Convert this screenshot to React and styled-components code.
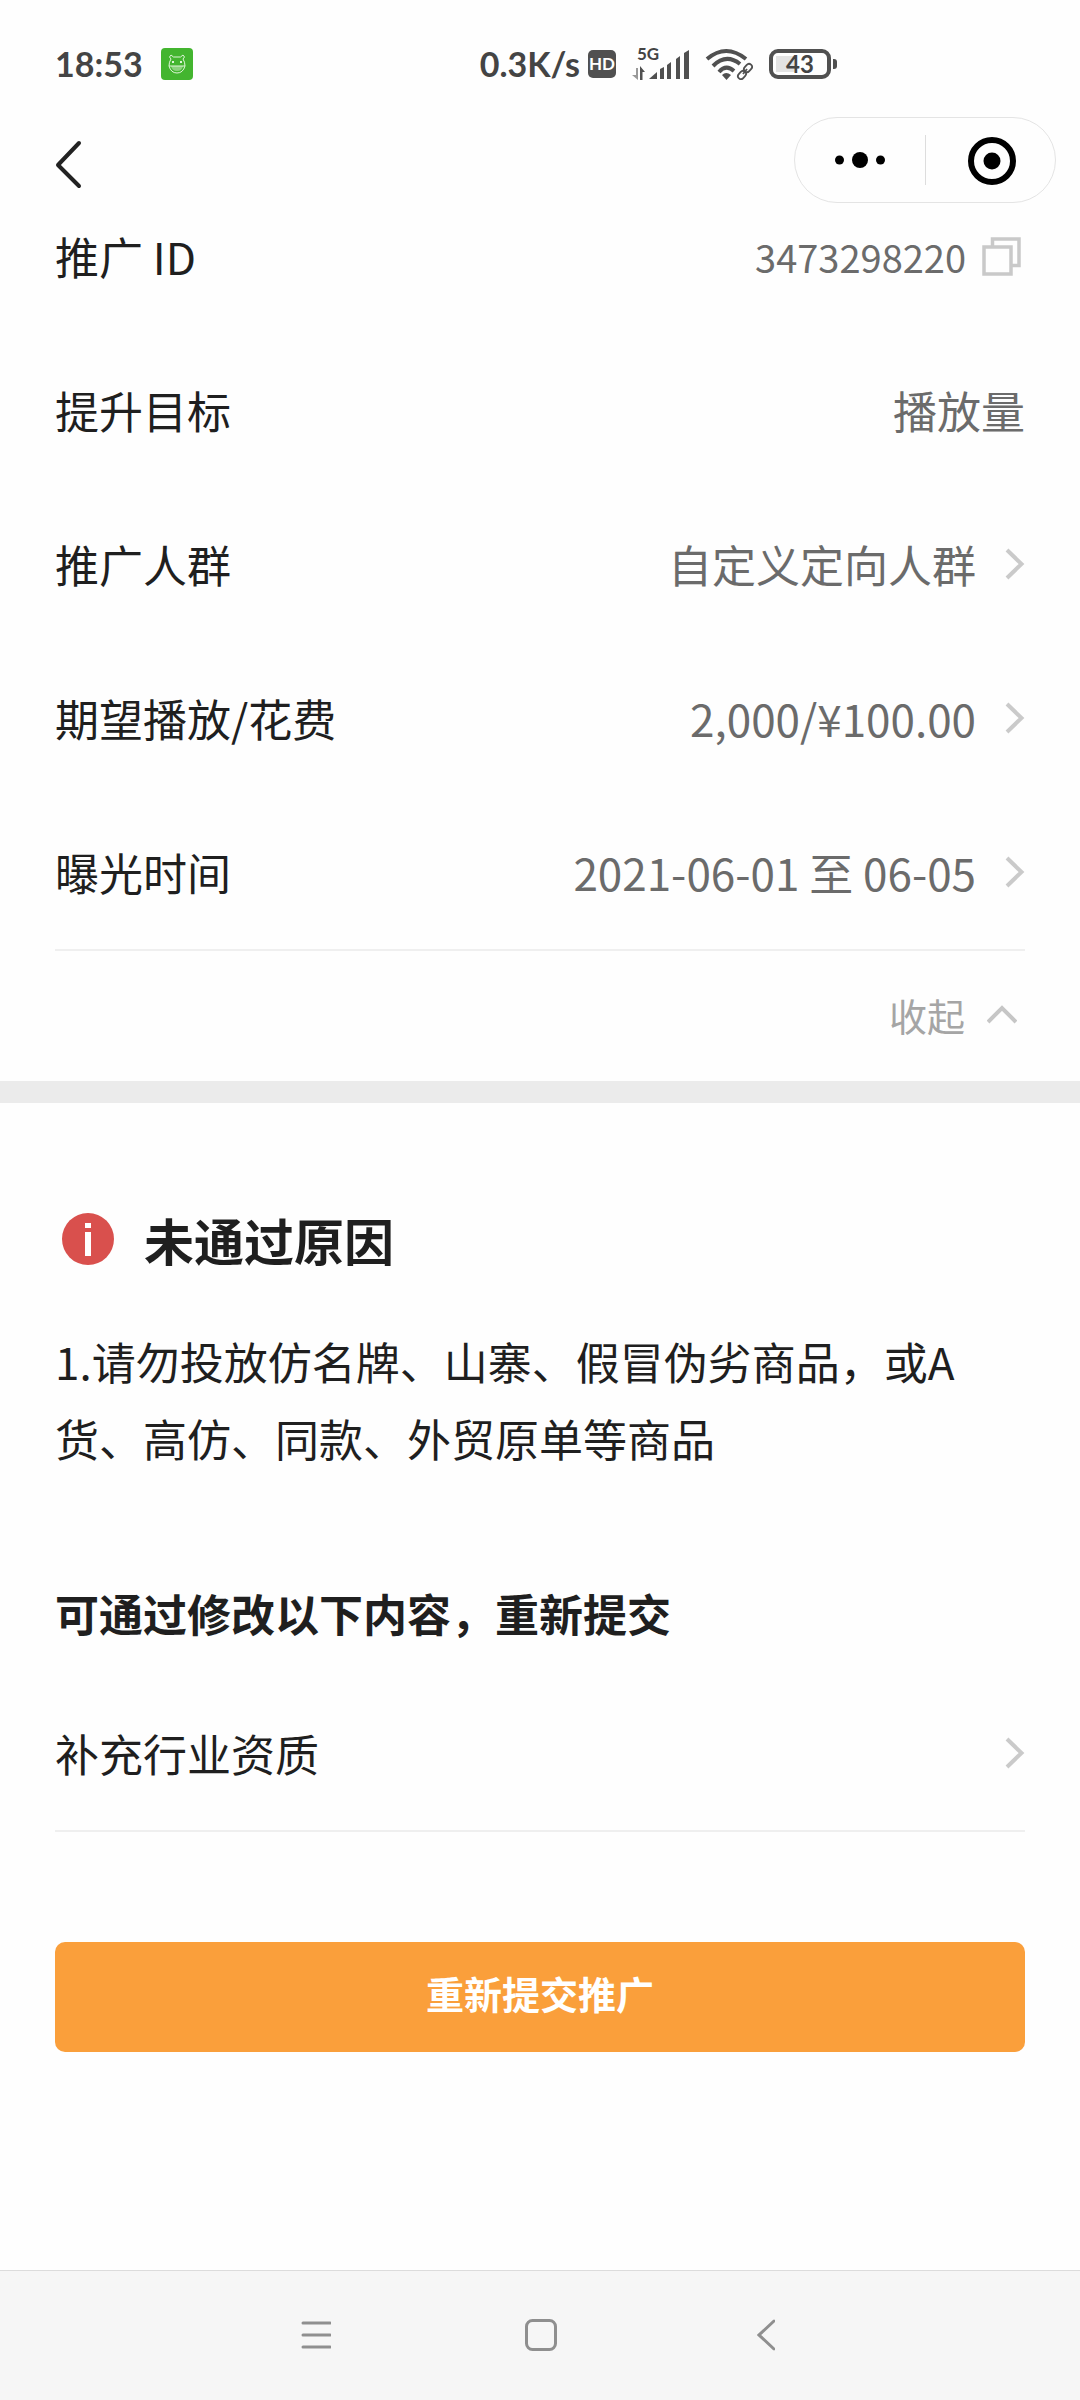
import React, { useState } from "react";
import styled, { createGlobalStyle } from "styled-components";

const sidePadding = 55;

const GlobalStyle = createGlobalStyle`
  * {
    box-sizing: border-box;
  }
  body {
    margin: 0;
    background: #fefefe;
    color: #1f1f1f;
    font-family: "Noto Sans CJK SC", sans-serif;
    font-size: 44px;
  }
  button {
    margin: 0;
    padding: 0;
    border: 0;
    background: none;
    color: inherit;
    font: inherit;
    cursor: pointer;
  }
  svg {
    display: block;
    flex-shrink: 0;
  }
`;

// styled components
const Page = styled.div`
  display: flex;
  flex-direction: column;
  min-height: 100vh;
`;
const Header = styled.header`
  position: relative;
  z-index: 1;
`;
const StatusBar = styled.div`
  display: flex;
  align-items: center;
  height: 84px;
  padding: 44px 243px 0 ${sidePadding}px;
  color: #444;
  font-family: Lato, sans-serif;
  font-size: 34px;
  font-weight: 700;
  line-height: 40px;
`;
const AppBadge = styled.span`
  margin-left: 18px;
`;
const StatusGroup = styled.div`
  display: flex;
  align-items: center;
  margin-left: auto;
`;
const HdBadge = styled.span`
  width: 28px;
  height: 28px;
  margin: 0 16px 0 8px;
  border-radius: 5px;
  background: #505050;
  color: #fff;
  font-size: 17px;
  line-height: 28px;
  text-align: center;
`;
const Signal = styled.div`
  position: relative;
  margin-right: 15px;
`;
const SignalType = styled.span`
  position: absolute;
  top: 0;
  left: 5px;
  font-size: 17px;
  line-height: 12px;
`;
const Battery = styled.div`
  display: flex;
  align-items: center;
  margin-left: 16px;
`;
const BatteryCase = styled.div`
  width: 62px;
  height: 30px;
  border: 4px solid #505050;
  border-radius: 9px;
  background: linear-gradient(#e3e3e3, #e3e3e3) 3px 3px / 20px 16px no-repeat;
  font-size: 24px;
  line-height: 22px;
  text-align: center;
`;
const BatteryTip = styled.span`
  width: 4px;
  height: 10px;
  margin-left: 2px;
  border-radius: 0 3px 3px 0;
  background: #505050;
`;
const NavBar = styled.div`
  display: flex;
  align-items: center;
  justify-content: space-between;
  padding: 33px 24px 0 ${sidePadding}px;
`;
const Capsule = styled.div`
  display: flex;
  align-items: center;
  width: 262px;
  height: 86px;
  border: 1px solid #e4e4e4;
  border-radius: 43px;
`;
const CapsuleButton = styled.button`
  display: flex;
  flex: 1;
  justify-content: center;

  & + & {
    border-left: 1px solid #ddd;
  }
`;
// the list is scrolled a little way under the header
const Details = styled.section`
  margin-top: -24px;
  padding: 0 ${sidePadding}px;
`;
const Row = styled.div`
  display: flex;
  align-items: center;
  width: 100%;
  height: 154px;
  text-align: left;
`;
const Label = styled.span`
  flex: 1;
`;
const Value = styled.span`
  color: #6b6b6b;
  font-size: ${props => props.$small ? "38px" : "44px"};
`;
const CopyButton = styled.button`
  margin: 0 4px 0 16px;
`;
const RowArrow = styled.span`
  margin-left: 29px;
`;
const Divider = styled.hr`
  height: 2px;
  margin: 0;
  border: 0;
  background: #efefef;
`;
const Collapse = styled.button`
  display: flex;
  align-items: center;
  gap: 22px;
  height: 130px;
  margin-left: auto;
  padding: 0 8px 4px 0;
  color: #a5a5a5;
  font-size: 38px;
`;
const Band = styled.div`
  height: 22px;
  background: #ebebeb;
`;
const Reason = styled.section`
  padding: 100px ${sidePadding}px 0;
`;
const ReasonTitle = styled.h2`
  display: flex;
  align-items: center;
  gap: 30px;
  margin: 0;
  padding-left: 7px;
  font-size: 50px;
  line-height: 72px;
`;
const ReasonText = styled.p`
  margin: 48px 0 0;
  padding-right: 54px;
  line-height: 77px;
`;
const SubTitle = styled.h3`
  margin: 98px 0 24px;
  font-size: 44px;
  line-height: 77px;
`;
const SubmitButton = styled.button`
  width: 100%;
  height: 110px;
  margin: 110px 0;
  padding-bottom: 10px;
  border-radius: 10px;
  background: #fa9f3b;
  color: #fff;
  font-size: 38px;
  font-weight: 700;
`;
const SystemNav = styled.nav`
  display: flex;
  justify-content: center;
  height: 130px;
  margin-top: auto;
  padding: 0 0 2px 2px;
  border-top: 1px solid #dcdcdc;
  background: #f6f6f6;
`;
const SystemButton = styled.button`
  display: flex;
  align-items: center;
  justify-content: center;
  width: 225px;
`;

// icons
const RobotIcon = () => (
  <svg width="32" height="32" viewBox="0 0 32 32" fill="none" stroke="#dff5d8" strokeWidth="1">
    <rect width="32" height="32" rx="4" fill="#43b52f" stroke="none" />
    <path d="M10 11 L8.500 9 L10 7 L12.500 9 H19.500 L22 7 L23.500 9 L22 11 Q24 14 24 18 Q22 25 16 25 Q10 25 8 18 Q8 14 10 11 Z" />
    <path d="M10 18 H22 Q21 23 16 23 Q11 23 10 18" fill="#8bd37d" stroke="none" />
    <path d="M8 18 H24" />
    <path d="M12 13 V15 M20 13 V15" strokeWidth="2" />
  </svg>
);
const SignalIcon = () => (
  <svg width="58" height="32" viewBox="0 0 58 32" fill="#505050">
    <path d="M4 20 H6 V32 L0 27 H4 Z" fill="#999" />
    <path d="M8 32 V18 L13 24 H10.500 V32 Z" />
    <path d="M17 31 L25 24 V31 Z" />
    <path d="M28 21 L32 19 V31 H28 Z" />
    <path d="M35 17 L39 14 V31 H35 Z" />
    <path d="M44 11 L48 8 V31 H44 Z" />
    <path d="M52 5 L57 2 V31 H52 Z" />
  </svg>
);
const WifiIcon = () => (
  <svg width="48" height="32" viewBox="0 0 48 32" fill="none" stroke="#505050">
    <path d="M2 11 Q21 -5 41 11" strokeWidth="4" />
    <path d="M8 18 Q21 5 35 16" strokeWidth="4" />
    <path d="M14 24 Q21 16 29 23" strokeWidth="4" />
    <path d="M17 27 Q21 23 26 27 L21.500 32 Z" fill="#505050" stroke="none" />
    <g strokeWidth="1.800">
      <rect x="-4.500" y="-3" width="9" height="6" rx="3" transform="translate(43 20) rotate(-48)" />
      <rect x="-4.500" y="-3" width="9" height="6" rx="3" transform="translate(37 27) rotate(-48)" />
      <path d="M38 26 L42 21" />
    </g>
  </svg>
);
const BackIcon = () => (
  <svg width="28" height="58" viewBox="0 0 28 58" fill="none" stroke="#222" strokeWidth="4" strokeLinecap="round" strokeLinejoin="round">
    <path d="M24 12 L3 34 L24 55" />
  </svg>
);
const MoreIcon = () => (
  <svg width="50" height="50" viewBox="0 0 50 50">
    <circle cx="4.500" cy="25" r="4.500" />
    <circle cx="25" cy="25" r="8" />
    <circle cx="45.500" cy="25" r="4.500" />
  </svg>
);
const TargetIcon = () => (
  <svg width="52" height="50" viewBox="0 0 52 50">
    <circle cx="28" cy="26" r="21" fill="none" stroke="#000" strokeWidth="6" />
    <circle cx="28" cy="26" r="8.500" />
  </svg>
);
const CopyIcon = () => (
  <svg width="39" height="39" viewBox="0 0 39 39" fill="none" stroke="#c9c9c9" strokeWidth="3.500">
    <path d="M10.500 9 V2 H37 V28.500 H30" />
    <rect x="2" y="10" width="27" height="27" />
  </svg>
);
const ArrowIcon = () => (
  <svg width="20" height="32" viewBox="0 0 20 32" fill="none" stroke="#cacaca" strokeWidth="4">
    <path d="M2 2 L16.500 16 L2 30" />
  </svg>
);
const UpIcon = () => (
  <svg width="30" height="20" viewBox="0 0 30 20" fill="none" stroke="#c6c6c6" strokeWidth="4">
    <path d="M1 18 L15 4 L29 18" />
  </svg>
);
const InfoIcon = () => (
  <svg width="52" height="52" viewBox="0 0 52 52">
    <circle cx="26" cy="26" r="26" fill="#d9504d" />
    <rect x="23" y="10" width="6" height="5" fill="#fff" />
    <rect x="23" y="19" width="6" height="24" fill="#fff" />
  </svg>
);
const MenuIcon = () => (
  <svg width="30" height="32" viewBox="0 0 30 32" stroke="#8f8f8f" strokeWidth="3" strokeLinecap="round">
    <path d="M2 4 H29 M2 16 H29 M2 28 H29" />
  </svg>
);
const HomeIcon = () => (
  <svg width="32" height="32" viewBox="0 0 32 32" fill="none" stroke="#8f8f8f" strokeWidth="3">
    <rect x="1.500" y="1.500" width="29" height="29" rx="6" />
  </svg>
);
const SystemBackIcon = () => (
  <svg width="18" height="32" viewBox="0 0 18 32" fill="none" stroke="#8f8f8f" strokeWidth="3" strokeLinecap="round">
    <path d="M17 2 L2 16 L17 30" />
  </svg>
);

const details = [
  { label: "推广 ID", value: "3473298220", copy: true },
  { label: "提升目标", value: "播放量" },
  { label: "推广人群", value: "自定义定向人群", link: true },
  { label: "期望播放/花费", value: "2,000/¥100.00", link: true },
  { label: "曝光时间", value: "2021-06-01 至 06-05", link: true },
];

// main component
const App = () => {
  const [open, setOpen] = useState(true);

  const renderRow = item => (
    <Row key={item.label} as={item.link ? "button" : "div"}>
      <Label>{item.label}</Label>
      {item.value && <Value $small={item.copy}>{item.value}</Value>}
      {item.copy && <CopyButton aria-label="复制"><CopyIcon /></CopyButton>}
      {item.link && <RowArrow><ArrowIcon /></RowArrow>}
    </Row>
  );

  return (
    <Page lang="zh-CN">
      <GlobalStyle />
      <Header>
        <StatusBar>
          <span>18:53</span>
          <AppBadge><RobotIcon /></AppBadge>
          <StatusGroup>
            <span>0.3K/s</span>
            <HdBadge>HD</HdBadge>
            <Signal>
              <SignalType>5G</SignalType>
              <SignalIcon />
            </Signal>
            <WifiIcon />
            <Battery>
              <BatteryCase>43</BatteryCase>
              <BatteryTip />
            </Battery>
          </StatusGroup>
        </StatusBar>
        <NavBar>
          <button aria-label="返回"><BackIcon /></button>
          <Capsule>
            <CapsuleButton aria-label="更多"><MoreIcon /></CapsuleButton>
            <CapsuleButton aria-label="关闭"><TargetIcon /></CapsuleButton>
          </Capsule>
        </NavBar>
      </Header>
      <main>
        <Details>
          {(open ? details : details.slice(0, 1)).map(renderRow)}
          <Divider />
          <Collapse aria-expanded={open} onClick={() => setOpen(!open)}>
            {open ? "收起" : "展开"}
            <UpIcon />
          </Collapse>
        </Details>
        <Band />
        <Reason>
          <ReasonTitle>
            <InfoIcon />
            未通过原因
          </ReasonTitle>
          <ReasonText>
            1.请勿投放仿名牌、山寨、假冒伪劣商品，或A货、高仿、同款、外贸原单等商品
          </ReasonText>
          <SubTitle>可通过修改以下内容，重新提交</SubTitle>
          {renderRow({ label: "补充行业资质", link: true })}
          <Divider />
          <SubmitButton>重新提交推广</SubmitButton>
        </Reason>
      </main>
      <SystemNav>
        <SystemButton aria-label="最近任务"><MenuIcon /></SystemButton>
        <SystemButton aria-label="主页"><HomeIcon /></SystemButton>
        <SystemButton aria-label="系统返回"><SystemBackIcon /></SystemButton>
      </SystemNav>
    </Page>
  );
};

export default App;
